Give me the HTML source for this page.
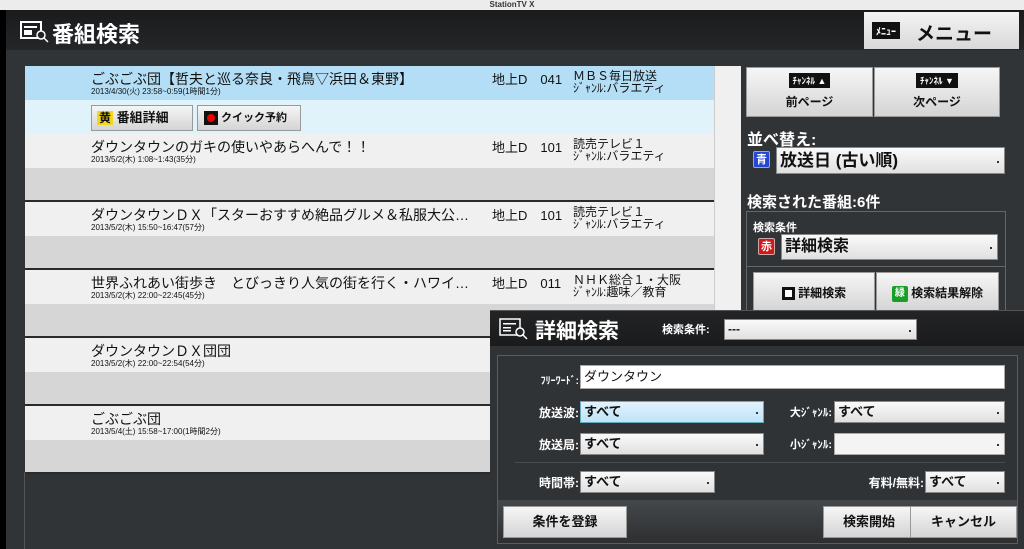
<!DOCTYPE html>
<html><head><meta charset="utf-8"><style>
*{margin:0;padding:0;box-sizing:border-box}
body{width:1024px;height:549px;overflow:hidden;background:#313437;font-family:"Liberation Sans","Noto Sans CJK JP",sans-serif;position:relative;color:#111}
.a{position:absolute}
.tb{left:0;top:0;width:1024px;height:10px;background:#ececec;font-size:8px;text-align:center;line-height:10px;color:#333;font-weight:bold}
.hdr{left:5px;top:10px;width:1019px;height:40px;background:linear-gradient(#1a1b1c,#242628)}
.lb{left:0;top:10px;width:6px;height:539px;background:#000}
.title{left:52px;top:17px;color:#fff;font-size:22px;font-weight:bold}
.menu{left:864px;top:12px;width:155px;height:37px;background:linear-gradient(#f4f4f4,#d8d8d8)}
.row{left:25px;width:689px;height:68px;background:#d6d6d6;border-bottom:2px solid #2a2a2a}
.row .t{position:absolute;left:0;top:0;width:100%;height:34px;background:#f0f0f0}
.nm{position:absolute;left:66px;top:3px;font-size:14px;white-space:nowrap}
.dt{position:absolute;left:66px;top:20px;font-size:8px}
.ch{position:absolute;left:467px;top:3px;font-size:13px;white-space:nowrap}
.ch2{position:absolute;left:548px;top:4px;font-size:12px;line-height:12px;white-space:nowrap}
.btn{background:linear-gradient(#f6f6f6,#d4d4d4);border:1px solid #999;font-weight:bold;text-align:center}
.sel{background:linear-gradient(#fafafa,#e0e0e0);border:1px solid #888;font-weight:bold;font-size:13px;padding-left:3px}
.sel:after{content:"";position:absolute;right:5px;top:50%;width:2px;height:2px;background:#333}
.lab{color:#fff;font-weight:bold;font-size:12px;text-align:right}
.tag{background:#111;color:#fff;font-size:9px;padding:1px 4px;font-weight:bold}
.ic{width:17px;height:17px;color:#fff;font-size:11px;text-align:center;line-height:17px;font-weight:bold;border-radius:2px}
</style></head><body>
<div class="a tb">StationTV X</div>
<div class="a hdr"></div><div class="a lb"></div>
<svg class="a" style="left:20px;top:21px" width="30" height="22" viewBox="0 0 30 22"><rect x="1" y="1" width="20" height="16" fill="none" stroke="#fff" stroke-width="2"/><rect x="4" y="5" width="13" height="2" fill="#fff"/><rect x="4" y="9" width="8" height="5" fill="#fff"/><circle cx="21" cy="14" r="4" fill="#222" stroke="#fff" stroke-width="1.5"/><line x1="24" y1="17" x2="28" y2="21" stroke="#fff" stroke-width="1.5"/></svg>
<div class="a title">番組検索</div>
<div class="a menu"><span class="a tag" style="left:8px;top:10px;font-size:10px">ﾒﾆｭｰ</span><span class="a" style="left:52px;top:7px;font-size:19px;font-weight:bold">メニュー</span></div>

<div class="a" style="left:25px;top:66px;width:689px;height:68px;background:#e0f3fb"><div style="position:absolute;left:0;top:0;width:100%;height:34px;background:#b3def5"></div>
<div class="nm">ごぶごぶ団【哲夫と巡る奈良・飛鳥▽浜田＆東野】</div><div class="dt">2013/4/30(火) 23:58~0:59(1時間1分)</div>
<div class="ch">地上D　041</div><div class="ch2">ＭＢＳ毎日放送<br>ｼﾞｬﾝﾙ:バラエティ</div>
<div class="a btn" style="left:66px;top:39px;width:102px;height:26px;font-size:13px;line-height:24px;text-align:left;padding-left:5px"><span style="background:#f2d71c;padding:0 2px;font-size:12px">黄</span> 番組詳細</div>
<div class="a btn" style="left:172px;top:39px;width:104px;height:26px;font-size:11px;line-height:24px;text-align:left;padding-left:6px"><span style="display:inline-block;width:14px;height:14px;background:#111;vertical-align:middle;position:relative"><span style="position:absolute;left:3px;top:3px;width:8px;height:8px;border-radius:50%;background:#e00"></span></span> クイック予約</div>
</div>
<div class="a row" style="top:134px"><div class="t"></div><div class="nm">ダウンタウンのガキの使いやあらへんで！！</div><div class="dt">2013/5/2(木) 1:08~1:43(35分)</div><div class="ch">地上D　101</div><div class="ch2">読売テレビ１<br>ｼﾞｬﾝﾙ:バラエティ</div></div>
<div class="a row" style="top:202px"><div class="t"></div><div class="nm">ダウンタウンＤＸ「スターおすすめ絶品グルメ＆私服大公…</div><div class="dt">2013/5/2(木) 15:50~16:47(57分)</div><div class="ch">地上D　101</div><div class="ch2">読売テレビ１<br>ｼﾞｬﾝﾙ:バラエティ</div></div>
<div class="a row" style="top:270px"><div class="t"></div><div class="nm">世界ふれあい街歩き　とびっきり人気の街を行く・ハワイ…</div><div class="dt">2013/5/2(木) 22:00~22:45(45分)</div><div class="ch">地上D　011</div><div class="ch2">ＮＨＫ総合１・大阪<br>ｼﾞｬﾝﾙ:趣味／教育</div></div>
<div class="a row" style="top:338px"><div class="t"></div><div class="nm">ダウンタウンＤＸ団団</div><div class="dt">2013/5/2(木) 22:00~22:54(54分)</div></div>
<div class="a row" style="top:406px"><div class="t"></div><div class="nm">ごぶごぶ団</div><div class="dt">2013/5/4(土) 15:58~17:00(1時間2分)</div></div>
<div class="a" style="left:714px;top:66px;width:27px;height:483px;background:#f0f0f0;border-left:1px solid #ccc"></div>
<div class="a" style="left:24px;top:472px;width:1px;height:77px;background:#555"></div>

<div class="a btn" style="left:746px;top:67px;width:127px;height:50px"><span class="tag" style="display:inline-block;margin-top:5px">ﾁｬﾝﾈﾙ ▲</span><div style="font-size:12px;margin-top:4px">前ページ</div></div>
<div class="a btn" style="left:874px;top:67px;width:126px;height:50px"><span class="tag" style="display:inline-block;margin-top:5px">ﾁｬﾝﾈﾙ ▼</span><div style="font-size:12px;margin-top:4px">次ページ</div></div>
<div class="a" style="left:747px;top:126px;color:#fff;font-weight:bold;font-size:16px">並べ替え:</div>
<div class="a ic" style="left:753px;top:151px;background:#2447d8;border:1px solid #9ab">青</div>
<div class="a sel" style="left:776px;top:147px;width:229px;height:27px;font-size:17px;line-height:25px">放送日 (古い順)</div>
<div class="a" style="left:747px;top:191px;color:#fff;font-weight:bold;font-size:15px">検索された番組:6件</div>
<div class="a" style="left:746px;top:211px;width:260px;height:100px;border:1px solid #666"></div>
<div class="a" style="left:753px;top:219px;color:#fff;font-weight:bold;font-size:11px">検索条件</div>
<div class="a ic" style="left:758px;top:238px;background:#d01818;border:1px solid #caa">赤</div>
<div class="a sel" style="left:781px;top:234px;width:217px;height:26px;font-size:16px;line-height:24px">詳細検索</div>
<div class="a" style="left:747px;top:266px;width:258px;height:1px;background:#666"></div>
<div class="a btn" style="left:753px;top:272px;width:122px;height:40px;font-size:12px;line-height:40px"><span style="display:inline-block;width:13px;height:13px;background:#111;vertical-align:middle;position:relative"><span style="position:absolute;left:3px;top:3px;width:7px;height:7px;background:#fff"></span></span> 詳細検索</div>
<div class="a btn" style="left:876px;top:272px;width:123px;height:40px;font-size:12px;line-height:40px"><span class="ic" style="display:inline-block;background:#1a9e2a;width:16px;height:16px;line-height:16px;font-size:10px;vertical-align:middle">緑</span> 検索結果解除</div>

<div class="a" style="left:490px;top:310px;width:534px;height:239px;background:#303336"></div>
<div class="a" style="left:490px;top:310px;width:534px;height:36px;background:linear-gradient(#232426,#1a1b1c)"></div>
<div class="a" style="left:490px;top:310px;width:534px;height:1px;background:#555"></div>
<svg class="a" style="left:499px;top:318px" width="30" height="22" viewBox="0 0 30 22"><rect x="1" y="1" width="20" height="16" fill="none" stroke="#fff" stroke-width="1.5"/><rect x="4" y="5" width="13" height="1.5" fill="#fff"/><rect x="4" y="9" width="8" height="1.5" fill="#fff"/><rect x="4" y="12" width="8" height="1.5" fill="#fff"/><circle cx="21" cy="14" r="4" fill="#222" stroke="#fff" stroke-width="1.5"/><line x1="24" y1="17" x2="28" y2="21" stroke="#fff" stroke-width="1.5"/></svg>
<div class="a" style="left:535px;top:315px;color:#fff;font-size:21px;font-weight:bold">詳細検索</div>
<div class="a lab" style="left:662px;top:321px;font-size:11px">検索条件:</div>
<div class="a sel" style="left:724px;top:319px;width:193px;height:21px;line-height:19px;font-size:12px">---</div>
<div class="a" style="left:497px;top:355px;width:521px;height:189px;border:1px solid #5a5d60"></div>
<div class="a" style="left:498px;top:500px;width:519px;height:43px;background:linear-gradient(#45484b,#2d2f31)"></div>
<div class="a lab" style="left:510px;top:372px;width:69px;font-size:10px">ﾌﾘｰﾜｰﾄﾞ:</div>
<div class="a" style="left:580px;top:365px;width:425px;height:24px;background:#fff;border:1px solid #aaa;font-size:13px;line-height:22px;padding-left:3px">ダウンタウン</div>
<div class="a lab" style="left:510px;top:404px;width:69px">放送波:</div>
<div class="a sel" style="left:580px;top:401px;width:184px;height:22px;line-height:20px;background:linear-gradient(#e2f3fd,#bfe4f8);border-color:#6ab">すべて</div>
<div class="a lab" style="left:760px;top:404px;width:72px;font-size:11px">大ｼﾞｬﾝﾙ:</div>
<div class="a sel" style="left:834px;top:401px;width:171px;height:22px;line-height:20px">すべて</div>
<div class="a lab" style="left:510px;top:436px;width:69px">放送局:</div>
<div class="a sel" style="left:580px;top:433px;width:184px;height:22px;line-height:20px">すべて</div>
<div class="a lab" style="left:760px;top:436px;width:72px;font-size:11px">小ｼﾞｬﾝﾙ:</div>
<div class="a sel" style="left:834px;top:433px;width:171px;height:22px;background:#f4f4f4;border-color:#aaa"></div>
<div class="a" style="left:515px;top:462px;width:490px;height:1px;background:#4a4d50"></div>
<div class="a lab" style="left:510px;top:474px;width:69px">時間帯:</div>
<div class="a sel" style="left:580px;top:471px;width:135px;height:22px;line-height:20px">すべて</div>
<div class="a lab" style="left:840px;top:474px;width:84px">有料/無料:</div>
<div class="a sel" style="left:925px;top:471px;width:80px;height:22px;line-height:20px">すべて</div>
<div class="a btn" style="left:503px;top:506px;width:124px;height:32px;font-size:13px;line-height:30px">条件を登録</div>
<div class="a btn" style="left:823px;top:506px;width:92px;height:32px;font-size:13px;line-height:30px">検索開始</div>
<div class="a btn" style="left:910px;top:506px;width:107px;height:32px;font-size:13px;line-height:30px">キャンセル</div>
</body></html>
